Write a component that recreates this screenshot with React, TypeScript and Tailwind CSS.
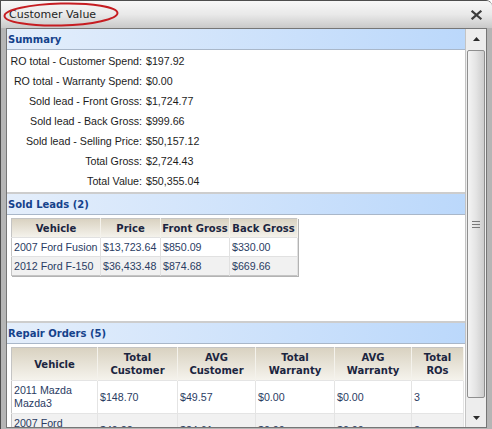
const summaryRows = [
  ['RO total - Customer Spend:', '$197.92'],
  ['RO total - Warranty Spend:', '$0.00'],
  ['Sold lead - Front Gross:', '$1,724.77'],
  ['Sold lead - Back Gross:', '$999.66'],
  ['Sold lead - Selling Price:', '$50,157.12'],
  ['Total Gross:', '$2,724.43'],
  ['Total Value:', '$50,355.04'],
];

const soldLeads = [
  ['2007 Ford Fusion', '$13,723.64', '$850.09', '$330.00'],
  ['2012 Ford F-150', '$36,433.48', '$874.68', '$669.66'],
];

const repairOrders = [
  ['2011 Mazda Mazda3', '$148.70', '$49.57', '$0.00', '$0.00', '3'],
  ['2007 Ford Explorer', '$49.22', '$24.61', '$0.00', '$0.00', '2'],
];

function SectionHeader({ title, first }: { title: string; first?: boolean }) {
  return (
    <div
      className={`h-[21px] shrink-0 flex items-center pl-[1px] border-b border-b-[#a9b7c9] bg-gradient-to-r from-[#e4eefb] to-[#bbd8fb] font-['DejaVu_Sans',sans-serif] font-bold text-[10px] text-[#15428b] ${
        first ? '' : 'border-t-2 border-t-[#cdcdcd] h-[23px]'
      }`}
    >
      {title}
    </div>
  );
}

function ScrollBar() {
  return (
    <div className="w-[21px] shrink-0 flex flex-col bg-[#ededed] border-l border-[#c4c4c4]">
      <div className="h-[18px] flex items-center justify-center pt-[2px]">
        <svg width="7" height="4" viewBox="0 0 7 4">
          <path d="M0 4 L3.5 0 L7 4 Z" fill="#2b2b2b" />
        </svg>
      </div>
      <div className="mt-[3px] h-[348px] px-[1px] flex">
        <div className="flex-1 rounded-[2px] border border-[#8f8f8f] bg-gradient-to-r from-[#f4f4f4] via-[#e4e4e4] to-[#cdcdcd] flex items-center justify-center">
          <div className="flex flex-col gap-[2px]">
            <div className="w-[8px] h-[1px] bg-[#7a7a7a]" />
            <div className="w-[8px] h-[1px] bg-[#7a7a7a]" />
            <div className="w-[8px] h-[1px] bg-[#7a7a7a]" />
          </div>
        </div>
      </div>
      <div className="flex-1 flex items-end justify-center pb-[7px]">
        <svg width="7" height="4" viewBox="0 0 7 4">
          <path d="M0 0 L7 0 L3.5 4 Z" fill="#2b2b2b" />
        </svg>
      </div>
    </div>
  );
}

export default function App() {
  return (
    <div className="w-[492px] h-[429px] flex flex-col bg-[#b5b5b5] border-l border-t border-[#4d4d4d] rounded-tr-[6px] overflow-hidden font-['Liberation_Sans',Arial,sans-serif]">
      {/* Title bar */}
      <div className="relative h-[27px] shrink-0 flex items-center justify-between pl-[8px] pr-[10px] bg-gradient-to-b from-[#f7f7f7] via-[#e9e9e9] to-[#c9c9c9]">
        <span className="font-['DejaVu_Sans',sans-serif] text-[11px] text-[#1e1e1e] pt-[1px]">Customer Value</span>
        <svg width="11" height="10" viewBox="0 0 11 10" className="mr-[0px]">
          <path d="M1.5 1.5 L9.5 8.5 M9.5 1.5 L1.5 8.5" stroke="#3c3c3c" strokeWidth="2.2" strokeLinecap="square" />
        </svg>
        <svg width="120" height="27" viewBox="0 0 120 27" className="absolute left-[1px] top-0 pointer-events-none">
          <ellipse cx="59" cy="13.5" rx="56.5" ry="11" fill="none" stroke="#c61d22" strokeWidth="2" transform="rotate(-1.5 59 13.5)" />
        </svg>
      </div>

      {/* Body */}
      <div className="flex-1 min-h-0 pl-[5px] pr-[5px] pb-[1px] flex">
        <div className="flex-1 min-h-0 flex border border-[#767676] bg-white overflow-hidden">
          <div className="w-[458px] shrink-0 flex flex-col overflow-hidden">
            {/* Summary */}
            <SectionHeader title="Summary" first />
            <div className="pt-[1px] pb-[1px] text-[8pt] text-[#1c1c1c]">
              {summaryRows.map(([label, value]) => (
                <div key={label} className="h-[20px] flex items-center">
                  <span className="w-[139px] shrink-0 text-right pr-[4px]">{label}</span>
                  <span>{value}</span>
                </div>
              ))}
            </div>

            {/* Sold Leads */}
            <SectionHeader title="Sold Leads (2)" />
            <div className="h-[106px] shrink-0 pt-[3px] pl-[4px]">
              <table className="table-fixed border-collapse border border-[#c4c4c4] shadow-[1px_1px_0_#b3b3b3] text-[8pt]">
                <colgroup>
                  <col className="w-[89px]" />
                  <col className="w-[60px]" />
                  <col className="w-[69px]" />
                  <col className="w-[68px]" />
                </colgroup>
                <thead>
                  <tr className="bg-gradient-to-b from-[#d9d2c1] to-[#f6f4ee]">
                    {['Vehicle', 'Price', 'Front Gross', 'Back Gross'].map((h) => (
                      <th
                        key={h}
                        className="h-[19px] px-[1px] border-r border-[#f4f2ec] font-['DejaVu_Sans',sans-serif] font-bold text-[10px] text-[#1b2540] text-center whitespace-nowrap"
                      >
                        {h}
                      </th>
                    ))}
                  </tr>
                </thead>
                <tbody>
                  {soldLeads.map((row, i) => (
                    <tr key={row[0]} className={i % 2 ? 'bg-[#f1f1f1]' : 'bg-white'}>
                      {row.map((c, j) => (
                        <td
                          key={j}
                          className="h-[19px] px-[2px] border-t border-r border-[#e1e1e1] text-[#2a3c63] whitespace-nowrap"
                        >
                          {c}
                        </td>
                      ))}
                    </tr>
                  ))}
                </tbody>
              </table>
            </div>

            {/* Repair Orders */}
            <SectionHeader title="Repair Orders (5)" />
            <div className="pt-[3px] pl-[4px]">
              <table className="table-fixed border-collapse border border-[#c4c4c4] text-[8pt] leading-[13px]">
                <colgroup>
                  <col className="w-[86px]" />
                  <col className="w-[80px]" />
                  <col className="w-[78px]" />
                  <col className="w-[79px]" />
                  <col className="w-[77px]" />
                  <col className="w-[52px]" />
                </colgroup>
                <thead>
                  <tr className="bg-gradient-to-b from-[#d9d2c1] to-[#f6f4ee]">
                    {[
                      ['Vehicle'],
                      ['Total', 'Customer'],
                      ['AVG', 'Customer'],
                      ['Total', 'Warranty'],
                      ['AVG', 'Warranty'],
                      ['Total', 'ROs'],
                    ].map((h) => (
                      <th
                        key={h.join(' ')}
                        className="h-[32px] px-[1px] py-[3px] border-r border-[#f4f2ec] font-['DejaVu_Sans',sans-serif] font-bold text-[10px] leading-[13px] text-[#1b2540] text-center"
                      >
                        {h.map((line) => (
                          <div key={line}>{line}</div>
                        ))}
                      </th>
                    ))}
                  </tr>
                </thead>
                <tbody>
                  {repairOrders.map((row, i) => (
                    <tr key={row[0]} className={i % 2 ? 'bg-[#f1f1f1]' : 'bg-white'}>
                      {row.map((c, j) => (
                        <td
                          key={j}
                          className="h-[32px] px-[2px] py-[3px] border-t border-r border-[#e4e4e4] text-[#2a3c63] align-middle"
                        >
                          {c}
                        </td>
                      ))}
                    </tr>
                  ))}
                </tbody>
              </table>
            </div>
          </div>
          <ScrollBar />
        </div>
      </div>
    </div>
  );
}
